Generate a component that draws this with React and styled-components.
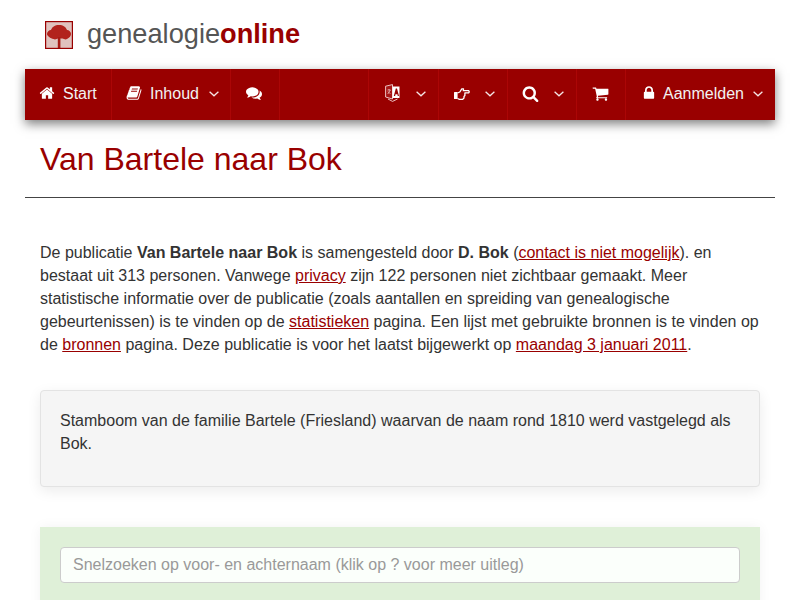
import React from 'react';
import styled, { createGlobalStyle } from 'styled-components';

const Global = createGlobalStyle`
  html, body { margin: 0; padding: 0; background: #fff; height: 600px; overflow: hidden; }
  body { font-family: "Liberation Sans", Arial, sans-serif; font-size: 16px; line-height: 23px; color: #333; }
  * { box-sizing: border-box; }
`;
const Page = styled.div`width: 800px; padding: 0 25px;`;
const Brand = styled.header`height: 69px; display: flex; align-items: center; padding: 0 0 0 20px; gap: 14px;`;
const Logo = styled.svg`width: 28px; height: 28px; display: block; flex: none;`;
const BrandName = styled.div`font-size: 27.2px; line-height: 30px; margin-top: -2px; color: #555; strong { color: #990000; font-weight: 700; }`;
const Nav = styled.nav`height: 51px; background: #990000; display: flex; color: #fff; box-shadow: 0 4px 10px rgba(0,0,0,.5);`;
const Item = styled.div`
  height: 100%; width: ${p => p.$w}px; display: flex; align-items: center; flex: none;
  padding: 0 0 3px ${p => p.$pad ?? 15}px; border-right: 1px solid ${p => p.$noBorder ? 'transparent' : '#ab0606'};
  font-size: 16px; color: #f2f2f2;
`;
const Glyph = styled.svg`width: ${p => p.$size ?? 16}px; height: ${p => p.$size ?? 16}px; flex: none; display: block; fill: #fff; fill-rule: evenodd; margin-right: ${p => p.$mr ?? 0}px;`;
const Lang = styled.svg`width: 15px; height: 18px; flex: none; display: block;`;
const Hand = styled.svg`width: 16px; height: 12px; flex: none; display: block; margin-top: 2px;`;
const Chevron = styled.svg`width: 10px; height: 6px; flex: none; display: block; fill: none; stroke: #f5e6e6; stroke-width: 1.3; margin: 2px 0 0 ${p => p.$ml ?? 10}px;`;
const Spacer = styled.div`flex: 1; border-right: 1px solid #ab0606;`;
const Title = styled.h1`margin: 0; height: 78px; padding: 21px 15px 0; font-size: 32px; line-height: 36px; font-weight: 400; color: #990000; border-bottom: 1px solid #444;`;
const Intro = styled.p`margin: 43px 15px 0; a { color: #990000; text-decoration: underline; }`;
const Well = styled.div`margin: 34px 15px 0; height: 97px; padding: 18px 19px; background: #f5f5f5; border: 1px solid #e3e3e3; border-radius: 4px; box-shadow: 0 4px 14px rgba(0,0,0,.08);`;
const SearchBox = styled.div`margin: 40px 15px 0; height: 120px; padding: 20px; background: #dff0d8; box-shadow: 0 0 12px rgba(0,0,0,.05);`;
const Input = styled.input`display: block; width: 100%; height: 36px; padding: 6px 12px; border: 1px solid #ccc; border-radius: 4px; background: #fbfffb; font: 16px "Liberation Sans", Arial, sans-serif; color: #555; outline: none; &::placeholder { color: #999; opacity: 1; }`;

const PATHS = {
  home: 'M1472 992v480q0 26-19 45t-45 19h-384v-384h-256v384h-384q-26 0-45-19t-19-45v-480q0-1 .5-3t.5-3l575-474 575 474q1 2 1 6zm223-69l-62 74q-8 9-21 11h-3q-13 0-21-7l-692-577-692 577q-12 8-24 7-13-2-21-11l-62-74q-8-10-7-23.5t11-21.5l719-599q32-26 76-26t76 26l244 204v-195q0-14 9-23t23-9h192q14 0 23 9t9 23v408l219 182q10 8 11 21.5t-7 23.5z',
  book: 'M1703 478q40 57 18 129l-275 906q-19 64-76.5 107.5t-122.5 43.5h-923q-77 0-148.5-53.5t-99.5-131.5q-24-67-2-127 0-4 3-27t4-37q1-8-3-21.5t-3-19.5q2-11 8-21t16.5-23.5 16.5-23.5q23-38 45-91.5t30-91.5q3-10 .5-30t-.5-28q3-11 17-28t17-23q21-36 42-92t25-90q1-9-2.500-32t.5-28q4-13 22-30.500t22-22.500q19-26 42.500-84.500t27.500-96.500q1-8-3-25.500t-2-26.500q2-8 9-18t18-23 17-21q8-12 16.500-30.500t15-35 16-36 19.500-32 26.500-23.500 36-11.500 47.500 5.500l-1 3q38-9 51-9h761q74 0 114 56t18 130l-274 906q-36 119-71.500 153.500t-128.500 34.500h-869q-27 0-38 15-11 16-1 43 24 70 144 70h923q29 0 56-15.500t35-41.500l300-987q7-22 5-57 38 15 59 43zm-1064 2q-4 13 2 22.500t20 9.500h608q13 0 25.500-9.500t16.500-22.500l21-64q4-13-2-22.500t-20-9.500h-608q-13 0-25.500 9.500t-16.500 22.500zm-83 256q-4 13 2 22.500t20 9.500h608q13 0 25.500-9.500t16.500-22.500l21-64q4-13-2-22.500t-20-9.500h-608q-13 0-25.500 9.500t-16.500 22.500z',
  comments: 'M1408 768q0 139-94 257t-256.500 186.500-353.500 68.500q-86 0-176-16-124 88-278 128-36 9-86 16h-3q-11 0-20.500-8t-11.500-21q-1-3-1-6.500t.5-6.500 2-6l2.500-5 3.500-5.500 4-5 4.500-5 4-4.500q5-6 23-25t26-29.500 22.500-29 25-38.500 20.500-44q-124-72-195-177t-71-224q0-139 94-257t256.500-186.500 353.500-68.500 353.500 68.500 256.500 186.500 94 257zm384 256q0 120-71 224.500t-195 176.500q10 24 20.500 44t25 38.500 22.500 29 26 29.500 23 25q1 1 4 4.500t4.500 5 4 5 3.500 5.500l2.500 5t2 6 .5 6.500-1 6.500q-3 14-13 22t-22 7q-50-7-86-16-154-40-278-128-90 16-176 16-271 0-472-132 58 4 88 4 161 0 309-45t264-129q125-92 192-212t67-254q0-77-23-152 129 71 204 178t75 230z',
  search: 'M1216 832q0-185-131.500-316.500t-316.500-131.500-316.500 131.500-131.500 316.500 131.500 316.500 316.500 131.500 316.500-131.500 131.500-316.500zm512 832q0 52-38 90t-90 38q-54 0-90-38l-343-342q-179 124-399 124-143 0-273.500-55.500t-225-150-150-225-55.500-273.500 55.500-273.500 150-225 225-150 273.500-55.500 273.500 55.500 225 150 150 225 55.500 273.500q0 220-124 399l343 343q37 37 37 90z',
  cart: 'M704 1536q0 52-38 90t-90 38-90-38-38-90 38-90 90-38 90 38 38 90zm896 0q0 52-38 90t-90 38-90-38-38-90 38-90 90-38 90 38 38 90zm128-1088v512q0 24-16.500 42.500t-40.500 21.500l-1044 122q13 60 13 70 0 16-24 64h920q26 0 45 19t19 45-19 45-45 19h-1024q-26 0-45-19t-19-45q0-11 8-31.500t16-36 21.500-40 15.500-29.500l-177-823h-204q-26 0-45-19t-19-45 19-45 45-19h256q16 0 28.500 6.500t19.500 15.500 13 24.500 8 26 5.500 29.500 4.500 26h1201q26 0 45 19t19 45z',
  lock: 'M640 768h512v-192q0-106-75-181t-181-75-181 75-75 181v192zm832 96v576q0 40-28 68t-68 28h-960q-40 0-68-28t-28-68v-576q0-40 28-68t68-28h32v-192q0-184 132-316t316-132 316 132 132 316v192h32q40 0 68 28t28 68z',
};

const Icon = ({ name, mr, size }) => (
  <Glyph viewBox="0 0 1792 1792" $mr={mr} $size={size}><path d={PATHS[name]} /></Glyph>
);
const Down = ({ ml }) => (
  <Chevron viewBox="0 0 10 6" $ml={ml}><path d="M.6 .8 5 4.800 9.400 .8" /></Chevron>
);
const HandIcon = () => (
  <Hand viewBox="0 0 16 12">
    <rect x="0" y="4" width="3.600" height="7" rx=".5" fill="#fff" />
    <path d="M3.500 5 5.800 4 7.800 .8h1.700L9.300 2.700h5.400q1 .9 0 2.200H10.900V7.500L10 8.500V10L8.500 11.400H5.500L3.500 10.500" fill="none" stroke="#fff" strokeWidth="1.300" strokeLinejoin="round" />
  </Hand>
);
const LangIcon = () => (
  <Lang viewBox="0 0 15 18">
    <path d="M.6 2.200 7.500 .6V15L.6 13z" fill="#a81616" stroke="#f3d6d6" strokeWidth=".9" />
    <path d="M7.500 2.500H14.500V14H7.500z" fill="#fff" />
    <path d="M8.800 12l2-7.500h1.200L14 12h-1.200l-.4-1.700h-1.900l-.4 1.700z" fill="#990000" />
    <path d="M2.500 6h3M4 5v1M2.800 10 5.300 6M3 7.500l2.300 2.300" stroke="#f3d6d6" strokeWidth=".7" fill="none" />
    <path d="M3 15l4.500 2.400 5-2.400" stroke="#f3d6d6" fill="none" strokeWidth=".9" />
  </Lang>
);

export default function App() {
  return (
    <Page>
      <Global />
      <Brand>
        <Logo viewBox="0 0 28 28">
          <defs><filter id="soft"><feGaussianBlur stdDeviation=".7" /></filter></defs>
          <rect width="28" height="28" fill="#e0c2be" />
          <g filter="url(#soft)" fill="#b2201a">
            <path d="M2 13c0-2 2-4 4-4 1-3 4-5 8-5s7 2 8 5c2 0 4 2 4 4s-2 4-4 5c-1 .5-2 .5-3 0-1-.5-2-.5-3-.5h-1.500c-1 0-2 0-3 .5s-2 .5-3 0c-3-.5-6.500-3-6.500-5z" />
          </g>
          <rect x="12.800" y="16" width="2.600" height="11" fill="#a81c16" />
          <rect x=".6" y=".6" width="26.800" height="26.800" fill="none" stroke="#990000" strokeWidth="1.200" />
        </Logo>
        <BrandName>genealogie<strong>online</strong></BrandName>
      </Brand>
      <Nav>
        <Item $w={87} $pad={14}><Icon name="home" mr={8} />Start</Item>
        <Item $w={119} $pad={14}><Icon name="book" mr={8} />Inhoud<Down ml={10} /></Item>
        <Item $w={49} $pad={15}><Icon name="comments" /></Item>
        <Spacer />
        <Item $w={70} $pad={16}><LangIcon /><Down ml={16} /></Item>
        <Item $w={69} $pad={15}><HandIcon /><Down ml={15} /></Item>
        <Item $w={69} $pad={14}><Icon name="search" size={17} /><Down ml={15} /></Item>
        <Item $w={49} $pad={15}><Icon name="cart" size={17} /></Item>
        <Item $w={149} $pad={15} $noBorder><Icon name="lock" mr={6} />Aanmelden<Down ml={9} /></Item>
      </Nav>
      <Title>Van Bartele naar Bok</Title>
      <Intro>
        De publicatie <b>Van Bartele naar Bok</b> is samengesteld door <b>D. Bok</b> (<a href="#c">contact is niet mogelijk</a>). en bestaat uit 313 personen. Vanwege <a href="#p">privacy</a> zijn 122 personen niet zichtbaar gemaakt. Meer statistische informatie over de publicatie (zoals aantallen en spreiding van genealogische gebeurtenissen) is te vinden op de <a href="#s">statistieken</a> pagina. Een lijst met gebruikte bronnen is te vinden op de <a href="#b">bronnen</a> pagina. Deze publicatie is voor het laatst bijgewerkt op <a href="#d">maandag 3 januari 2011</a>.
      </Intro>
      <Well>Stamboom van de familie Bartele (Friesland) waarvan de naam rond 1810 werd vastgelegd als Bok.</Well>
      <SearchBox>
        <Input placeholder="Snelzoeken op voor- en achternaam (klik op ? voor meer uitleg)" readOnly />
      </SearchBox>
    </Page>
  );
}
